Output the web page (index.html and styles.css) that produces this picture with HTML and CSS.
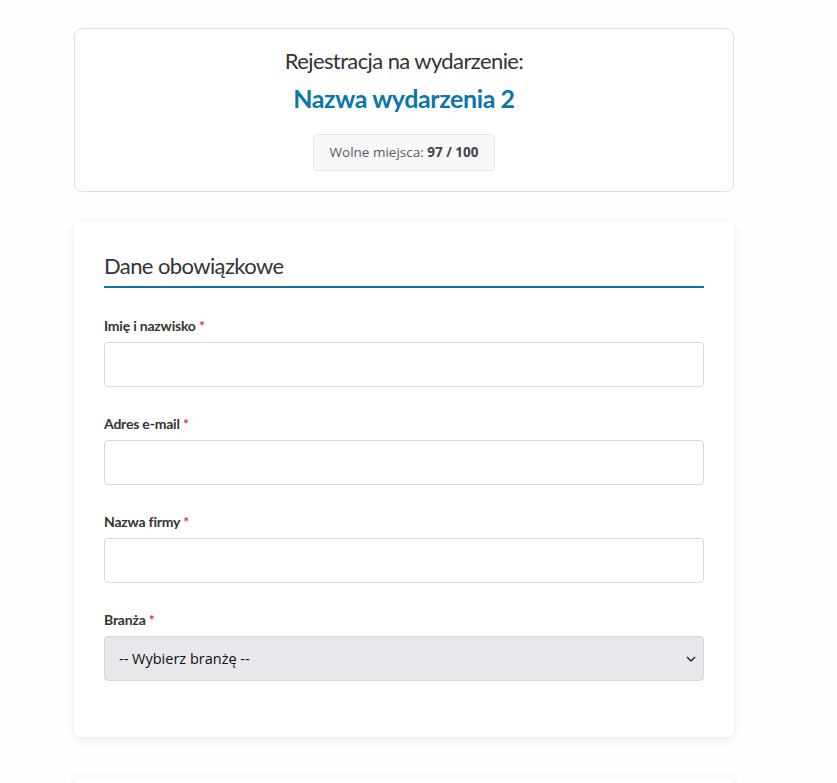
FILE: index.html
```html
<!DOCTYPE html>
<html lang="pl">
<head>
<meta charset="utf-8">
<title>Rejestracja</title>
<link rel="stylesheet" href="styles.css">
</head>
<body>
<main class="container">
  <section class="event-card">
    <h1 class="event-title">Rejestracja na wydarzenie:</h1>
    <h2 class="event-name">Nazwa wydarzenia 2</h2>
    <div class="seats">Wolne miejsca: <strong>97 / 100</strong></div>
  </section>

  <section class="form-card">
    <h3 class="section-title">Dane obowiązkowe</h3>
    <div class="field">
      <label class="label">Imię i nazwisko <span class="req">*</span></label>
      <input class="input" type="text">
    </div>
    <div class="field">
      <label class="label">Adres e-mail <span class="req">*</span></label>
      <input class="input" type="email">
    </div>
    <div class="field">
      <label class="label">Nazwa firmy <span class="req">*</span></label>
      <input class="input" type="text">
    </div>
    <div class="field">
      <label class="label">Branża <span class="req">*</span></label>
      <div class="select-wrap">
        <select class="select">
          <option>-- Wybierz branżę --</option>
        </select>
        <svg class="chev" width="10" height="6" viewBox="0 0 10 6"><path d="M1 1l4 4 4-4" fill="none" stroke="#222" stroke-width="1.4"/></svg>
      </div>
    </div>
  </section>

  <section class="form-card next-card"></section>
</main>
</body>
</html>
```

FILE: styles.css
```css
* { box-sizing: border-box; }
html, body { margin: 0; padding: 0; background: #fefefe; }
body { font-family: Lato, "Open Sans", sans-serif; color: #333; }
.container {
  width: 660px;
  margin: 28px 0 0 74px;
  display: flex;
  flex-direction: column;
  gap: 30px;
}
.event-card {
  background: #fff;
  border: 1px solid #dedede;
  border-radius: 8px;
  padding: 18px 20px 20px;
  display: flex;
  flex-direction: column;
  align-items: center;
}
.event-title {
  margin: 0;
  font-weight: 400;
  font-size: 22px;
  line-height: 28px;
  letter-spacing: -0.6px;
  color: #333;
}
.event-name {
  margin: 7px 0 0;
  font-weight: 700;
  font-size: 25px;
  line-height: 32px;
  letter-spacing: -0.4px;
  color: #0b76a8;
}
.seats {
  margin-top: 20px;
  background: #f7f8fa;
  border: 1px solid #e4e6e9;
  border-radius: 4px;
  padding: 9px 16px;
  font-family: "Open Sans", "Noto Sans", sans-serif;
  font-size: 13.5px;
  line-height: 17px;
  color: #5a5a5a;
}
.seats strong { color: #444; font-weight: 700; }
.form-card {
  background: #fff;
  border-radius: 8px;
  box-shadow: 0 2px 8px rgba(0, 0, 0, 0.09);
  padding: 29px 30px 56px;
  display: flex;
  flex-direction: column;
  gap: 28px;
}
.section-title {
  margin: 0 0 1px;
  font-weight: 400;
  font-size: 22px;
  line-height: 30px;
  letter-spacing: -0.6px;
  color: #333;
  padding-bottom: 5px;
  border-bottom: 2px solid #0b72a6;
}
.field { display: flex; flex-direction: column; gap: 8px; }
.label {
  font-weight: 700;
  font-size: 14px;
  line-height: 17px;
  letter-spacing: -0.2px;
  color: #333;
}
.req { color: #d9304a; }
.input {
  height: 45px;
  border: 1px solid #d8d8d8;
  border-radius: 4px;
  background: #fff;
  font: inherit;
}
.select-wrap { position: relative; }
.select {
  width: 100%;
  height: 45px;
  appearance: none;
  -webkit-appearance: none;
  border: 1px solid #d6d6da;
  border-radius: 4px;
  background: #e8e8ec;
  padding: 0 14px;
  font-family: "Open Sans", "Noto Sans", sans-serif;
  font-size: 14.5px;
  color: #111;
}
.chev { position: absolute; right: 8px; top: 20px; pointer-events: none; }
.next-card { height: 60px; padding: 0; margin-top: 10px; }
```
